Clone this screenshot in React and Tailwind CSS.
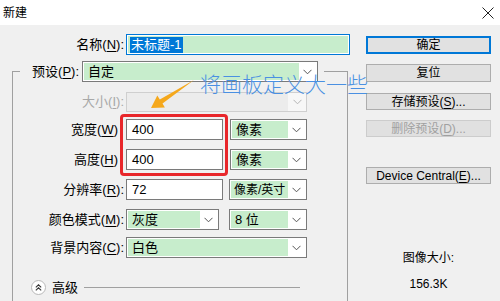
import React from "react";

const FONT = { fontFamily: '"Liberation Sans", "Noto Sans CJK SC", sans-serif' };

function Chevron({ color = "#555" }) {
  return (
    <svg width="9" height="6" viewBox="0 0 9 6">
      <path d="M0.5 0.8 L4.5 4.8 L8.5 0.8" fill="none" stroke={color} strokeWidth="1" />
    </svg>
  );
}

function Select({ w, text, disabled, small }) {
  if (disabled) {
    return (
      <div className={`${w} h-full flex border border-[#cfcfcf] bg-[#ececec]`}>
        <div className="flex-1" />
        <div className="w-[18px] bg-[#f7f7f7] flex items-center justify-center">
          <Chevron color="#b5b5b5" />
        </div>
      </div>
    );
  }
  return (
    <div className={`${w} h-full flex border border-[#7a7a7a] bg-white p-[1px]`}>
      <div
        className={`flex-1 min-w-0 bg-[#c7edcc] flex items-center text-black whitespace-nowrap ${
          small ? "pl-[3px] text-[12px]" : "pl-[4px] text-[13px]"
        }`}
      >
        {text}
      </div>
      <div className="w-[17px] shrink-0 flex items-center justify-center">
        <Chevron />
      </div>
    </div>
  );
}

function Input({ w, text }) {
  return (
    <div className={`${w} h-full border border-[#7a7a7a] bg-white flex items-center pl-[5px] text-[13px]`}>{text}</div>
  );
}

function Row({ label, mt, h = "h-[21px]", lpr = "", grey, children }) {
  return (
    <div className={`flex items-center ${h} ${mt}`}>
      <div className={`w-[111px] text-right text-[13px] whitespace-nowrap ${lpr} ${grey ? "text-[#a8a8a8]" : "text-black"}`}>{label}</div>
      <div className="ml-[2px] h-full flex">{children}</div>
    </div>
  );
}

function U({ c }) {
  return <span className="underline underline-offset-2">{c}</span>;
}

function Btn({ children, mt, h = "h-[17px]", primary, disabled }) {
  return (
    <div
      className={`${mt} ${h} w-[125px] flex items-center justify-center text-[12px] whitespace-nowrap ${
        primary
          ? "border-2 border-[#0078d7] bg-[#e1e1e1] text-black"
          : disabled
          ? "border border-[#cccccc] bg-[#e0e0e0] text-[#a0a0a0]"
          : "border border-[#adadad] bg-[#e1e1e1] text-black"
      }`}
    >
      {children}
    </div>
  );
}

export default function App() {
  return (
    <div className="w-[500px] h-[301px] bg-[#f0f0f0] overflow-hidden relative" style={FONT}>
      {/* title bar */}
      <div className="h-[25px] bg-white flex items-center justify-between pl-[3px] pr-[6px]">
        <span className="text-[12px] text-black">新建</span>
        <svg width="12" height="12" viewBox="0 0 12 12">
          <path d="M0.5 0.5 L11.5 11.5 M11.5 0.5 L0.5 11.5" stroke="#222" strokeWidth="1" />
        </svg>
      </div>

      <div className="flex">
        {/* left column */}
        <div className="w-[366px]">
          <div className="flex items-center h-[21px] mt-[9px]">
            <div className="w-[124px] text-right text-[13px] text-black">
              名称(<U c="N" />):
            </div>
            <div className="ml-[2px] w-[224px] h-full border border-[#0078d7] bg-white p-[1px]">
              <div className="h-full bg-[#c7edcc] flex items-center pl-[2px]">
                <span className="bg-[#0078d7] text-white text-[13px] leading-[16px] px-[1px]">未标题-1</span>
              </div>
            </div>
          </div>

          <fieldset className="ml-[12px] w-[336px] mt-[6px] border border-[#a0a0a0] pb-[40px]">
            <legend className="ml-[7px] pr-[6px]">
              <div className="flex items-center h-[21px]">
                <div className="w-[59px] text-right text-[13px] text-black whitespace-nowrap">
                  预设(<U c="P" />):
                </div>
                <div className="ml-[3px] h-full flex">
                  <Select w="w-[236px]" text="自定" />
                </div>
              </div>
            </legend>

            <Row label={<>大小(<U c="I" />):</>} mt="mt-[10px]" h="h-[20px]" grey>
              <Select w="w-[181px]" disabled />
            </Row>
            <Row label={<>宽度(<U c="W" />)</>} mt="mt-[7px]" lpr="pr-[6px]">
              <Input w="w-[97px]" text="400" />
              <div className="ml-[7px] h-full flex">
                <Select w="w-[77px]" text="像素" />
              </div>
            </Row>
            <Row label={<>高度(<U c="H" />)</>} mt="mt-[9px]" lpr="pr-[6px]">
              <Input w="w-[97px]" text="400" />
              <div className="ml-[7px] h-full flex">
                <Select w="w-[77px]" text="像素" />
              </div>
            </Row>
            <Row label={<>分辨率(<U c="R" />):</>} mt="mt-[9px]">
              <Input w="w-[97px]" text="72" />
              <div className="ml-[6px] h-full flex">
                <Select w="w-[78px]" text="像素/英寸" small />
              </div>
            </Row>
            <Row label={<>颜色模式(<U c="M" />):</>} mt="mt-[9px]">
              <Select w="w-[93px]" text="灰度" />
              <div className="ml-[10px] h-full flex">
                <Select w="w-[78px]" text="8 位" />
              </div>
            </Row>
            <Row label={<>背景内容(<U c="C" />):</>} mt="mt-[7px]">
              <Select w="w-[181px]" text="白色" />
            </Row>

            <div className="flex items-center h-[15px] mt-[22px] pl-[18px]">
              <div className="w-[15px] h-[15px] rounded-full border border-[#b8b8b8] bg-white flex items-center justify-center">
                <svg width="7" height="7" viewBox="0 0 7 7">
                  <path d="M0.8 3.3 L3.5 0.8 L6.2 3.3 M0.8 6.3 L3.5 3.8 L6.2 6.3" fill="none" stroke="#333" strokeWidth="1.1" />
                </svg>
              </div>
              <span className="ml-[6px] text-[13px] text-black">高级</span>
              <div className="ml-[6px] w-[216px] h-px bg-[#a0a0a0]" />
            </div>
          </fieldset>
        </div>

        {/* right column */}
        <div className="w-[125px] pt-[11px] flex flex-col">
          <Btn primary h="h-[18px]">确定</Btn>
          <Btn mt="mt-[10px]" h="h-[18px]">复位</Btn>
          <Btn mt="mt-[11px]">
            存储预设(<U c="S" />)...
          </Btn>
          <Btn mt="mt-[10px]" disabled>
            删除预设(<U c="D" />)...
          </Btn>
          <Btn mt="mt-[30px]">
            Device Central(<U c="E" />)...
          </Btn>
          <div className="mt-[66px] text-center text-[12px] leading-[16px] text-black">图像大小:</div>
          <div className="mt-[10px] text-center text-[12px] leading-[16px] text-black">156.3K</div>
        </div>
      </div>

      {/* annotation: red box */}
      <div className="absolute left-[120px] top-[114px] w-[108px] h-[62px] border-[3px] border-[#e8262a] rounded-[4px]" />

      {/* annotation: arrow */}
      <svg className="absolute left-0 top-0" width="500" height="301" viewBox="0 0 500 301">
        <polygon points="194,80 162.5,103.6 164.9,107.4 151,108 157.3,95.6 159.8,99.4" fill="#f5a81c" />
      </svg>

      {/* annotation: text */}
      <div className="absolute left-[200px] top-[71px] text-[21px] leading-[24px] font-light text-[#4a90e2] whitespace-nowrap" style={{ fontFamily: '"Noto Sans CJK SC", sans-serif' }}>
        将画板定义大一些
      </div>
    </div>
  );
}
